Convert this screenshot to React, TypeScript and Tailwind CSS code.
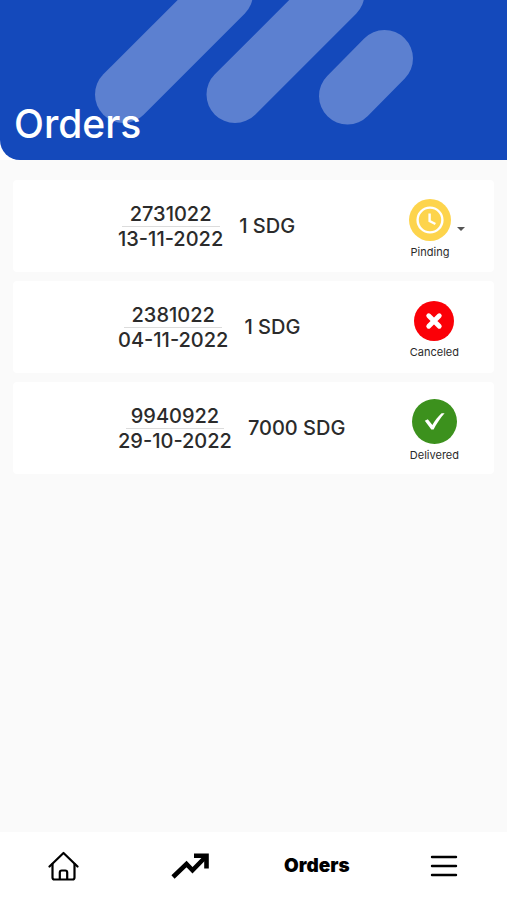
import type { ReactNode } from "react";

type Status = "pending" | "canceled" | "delivered";

type Order = { id: string; date: string; amount: string; status: Status };

const orders: Order[] = [
  { id: "2731022", date: "13-11-2022", amount: "1 SDG", status: "pending" },
  { id: "2381022", date: "04-11-2022", amount: "1 SDG", status: "canceled" },
  { id: "9940922", date: "29-10-2022", amount: "7000 SDG", status: "delivered" },
];

function PendingIcon() {
  return (
    <svg viewBox="0 0 42 42" className="size-[42px]" aria-hidden="true">
      <circle cx="21" cy="21" r="21" fill="#fdd44c" />
      <circle cx="21" cy="21" r="12.4" fill="none" stroke="#fff" strokeWidth="2.4" />
      <path d="M20.6 14.5V22L26.4 25" fill="none" stroke="#fff" strokeWidth="2.4" />
    </svg>
  );
}

function CanceledIcon() {
  return (
    <svg viewBox="0 0 40 40" className="size-10" aria-hidden="true">
      <circle cx="20" cy="20" r="20" fill="#fb0007" />
      <path d="M14.7 14.7L25.3 25.3M25.3 14.7L14.7 25.3" stroke="#fff" strokeWidth="4.8" strokeLinecap="round" />
    </svg>
  );
}

function DeliveredIcon() {
  return (
    <svg viewBox="0 0 45 45" className="size-[45px]" aria-hidden="true">
      <circle cx="22.5" cy="22.5" r="22.5" fill="#3c911d" />
      <path d="M12.8 21.7L15.8 20.2L20.4 26C22.9 21.5 25.8 17.7 29.6 14.3H32.6C28.2 19.3 24.4 25 21.6 30.6H19.3Z" fill="#fff" />
    </svg>
  );
}

const statuses: Record<Status, { label: string; icon: ReactNode }> = {
  pending: { label: "Pinding", icon: <PendingIcon /> },
  canceled: { label: "Canceled", icon: <CanceledIcon /> },
  delivered: { label: "Delivered", icon: <DeliveredIcon /> },
};

function StatusBadge({ status }: { status: Status }) {
  const { label, icon } = statuses[status];
  const content = (
    <span className="flex flex-col items-center gap-[3px]">
      {icon}
      <span className="text-[11px] leading-4">{label}</span>
    </span>
  );
  if (status !== "pending") {
    return <div className="pt-1.5 pr-[35px]">{content}</div>;
  }
  return (
    <button type="button" className="flex items-center gap-1.5 pt-1.5 pr-[29px]">
      {content}
      <svg viewBox="0 0 8 4" className="h-1 w-2" aria-hidden="true">
        <path d="M0 0H8L4 4Z" fill="#555" />
      </svg>
    </button>
  );
}

function OrderCard({ order }: { order: Order }) {
  return (
    <li className="flex h-[92px] items-center rounded-sm bg-white pl-[105px]">
      <div className="flex flex-1 items-center gap-4 text-xl leading-6 font-medium">
        <div className="flex flex-col items-center">
          <span>{order.id}</span>
          <span className="h-px w-[98px] bg-[#dcdcdc]" />
          <span>{order.date}</span>
        </div>
        <span>{order.amount}</span>
      </div>
      <StatusBadge status={order.status} />
    </li>
  );
}

export default function App() {
  return (
    <div className="flex min-h-screen flex-col bg-[#fafafa] font-['Inter',sans-serif] text-[#2b2b2b]">
      <div className="bg-white">
        <header className="relative flex h-40 items-end overflow-hidden rounded-bl-[20px] bg-[#1449bb] px-3.5 pb-3">
          <svg viewBox="0 0 507 160" className="absolute top-0 left-0 h-40 w-[507px]" aria-hidden="true">
            <g stroke="#5c80d0" strokeWidth="57" strokeLinecap="round">
              <path d="M123.500 94.500L224.500 -6.500" />
              <path d="M235 94.500L336 -6.500" />
              <path d="M347.500 96L384.500 58.500" />
            </g>
          </svg>
          <h1 className="relative text-[39px] leading-12 font-medium text-white">Orders</h1>
        </header>
      </div>

      <main className="flex-1 px-[13px] pt-5">
        <ul className="flex flex-col gap-[9px]">
          {orders.map((order) => (
            <OrderCard key={order.id} order={order} />
          ))}
        </ul>
      </main>

      <nav className="grid h-[68px] grid-cols-4 items-center justify-items-center bg-white text-black">
        <a href="#home" aria-label="Home">
          <svg viewBox="0 0 32 30" className="h-[30px] w-8" fill="none" stroke="currentColor" strokeWidth="2.2" strokeLinecap="round" strokeLinejoin="round" aria-hidden="true">
            <path d="M2.500 15.500L16.500 2L30.500 15.500" />
            <path d="M5.500 13V26.500Q5.500 28.500 7.500 28.500H25.500Q27.500 28.500 27.500 26.500V13" />
            <path d="M12.800 28V21.500Q12.800 19.500 14.800 19.500H18.200Q20.200 19.500 20.200 21.500V28" />
          </svg>
        </a>
        <a href="#trends" aria-label="Trends">
          <svg viewBox="0 0 38 26" className="h-[26px] w-[38px]" aria-hidden="true">
            <path d="M2 24L15.500 11L21.500 17.300L34 4.500" fill="none" stroke="currentColor" strokeWidth="4.600" />
            <path d="M23 2.800H35.500V15.500" fill="none" stroke="currentColor" strokeWidth="4.600" />
          </svg>
        </a>
        <a href="#orders" aria-current="page" className="text-[19px] leading-6 font-black">
          Orders
        </a>
        <button type="button" aria-label="Menu">
          <svg viewBox="0 0 28 22" className="h-[22px] w-7" stroke="currentColor" strokeWidth="2.4" strokeLinecap="round" aria-hidden="true">
            <path d="M2 2H26M2 11H26M2 20H26" />
          </svg>
        </button>
      </nav>
    </div>
  );
}
